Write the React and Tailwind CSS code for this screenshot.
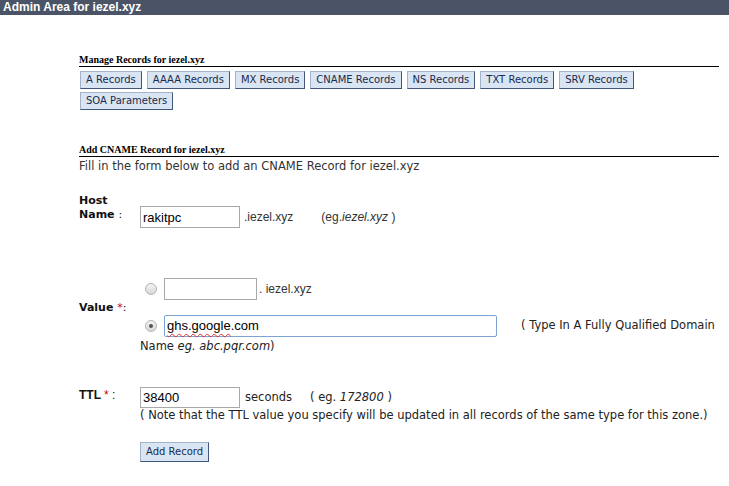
import React from "react"

const verdana = "font-['DejaVu_Sans',Verdana,sans-serif]"
const arial = "font-['Liberation_Sans',Arial,sans-serif]"
const serif = "font-['Liberation_Serif','Times_New_Roman',serif]"

const Btn = ({ children }) => (
    <button
        type="button"
        className={`h-[18px] px-[5px] bg-[#d9e5f2] border border-[#a3b4ca] border-r-[#42567a] border-b-[#42567a] text-[#1a2b4d] text-[10px] leading-none ${verdana}`}
    >
        {children}
    </button>
)

const Radio = ({ checked }) => (
    <span className="w-[12px] h-[12px] rounded-full border border-[#b4b4b4] bg-gradient-to-b from-[#f4f4f4] to-[#d8d8d8] flex items-center justify-center shrink-0">
        {checked && <span className="w-[4px] h-[4px] rounded-full bg-[#555]" />}
    </span>
)

const Field = ({ value, className }) => (
    <input
        readOnly
        value={value}
        className={`border border-[#a9a9a9] px-[2px] text-[13px] text-black outline-none bg-white ${arial} ${className}`}
    />
)

const SectionHead = ({ children, className }) => (
    <div className={`h-[13px] leading-[12px] text-[10px] font-bold text-black border-b border-black ${serif} ${className}`}>
        {children}
    </div>
)

export default function App() {
    const records = ['A Records', 'AAAA Records', 'MX Records', 'CNAME Records', 'NS Records', 'TXT Records', 'SRV Records', 'SOA Parameters']

    return (
        <div className="w-[729px] min-h-[486px] bg-white">
            <div className={`h-[15px] bg-[#4a5466] text-white font-bold text-[12px] leading-[15px] pl-[3px] ${arial}`}>
                Admin Area for iezel.xyz
            </div>

            <div className="ml-[79px] w-[640px]">
                <SectionHead className="mt-[39px]">Manage Records for iezel.xyz</SectionHead>
                <div className="mt-[4px] pl-[1px] flex flex-wrap gap-x-[5px] gap-y-[3px]">
                    {records.map((r) => (
                        <Btn key={r}>{r}</Btn>
                    ))}
                </div>

                <SectionHead className="mt-[34px]">Add CNAME Record for iezel.xyz</SectionHead>
                <div className={`pt-[2px] text-[11.5px] leading-[14px] text-[#333] ${verdana}`}>
                    Fill in the form below to add an CNAME Record for iezel.xyz
                </div>

                {/* host */}
                <div className="mt-[21px] flex items-start">
                    <div className={`w-[61px] shrink-0 text-[11px] leading-[14px] font-bold text-[#111] ${verdana}`}>
                        Host<br />Name <span className="font-normal">:</span>
                    </div>
                    <div className="pt-[12px] flex items-center">
                        <Field value="rakitpc" className="w-[100px] h-[22px]" />
                        <span className={`ml-[4px] text-[12px] text-[#333] ${arial}`}>.iezel.xyz</span>
                        <span className={`ml-[28px] text-[12px] text-[#333] ${arial}`}>
                            (eg.<i>iezel.xyz</i> )
                        </span>
                    </div>
                </div>

                {/* value */}
                <div className="mt-[50px] flex items-center">
                    <div className={`w-[61px] shrink-0 text-[11px] leading-[14px] font-bold text-[#111] ${verdana}`}>
                        Value <span className="text-[#cc0000] font-normal">*</span><span className="font-normal">:</span>
                    </div>
                    <div className="flex flex-col">
                        <div className="flex items-center pl-[5px]">
                            <Radio />
                            <Field value="" className="ml-[7px] w-[93px] h-[22px]" />
                            <span className={`ml-[2px] text-[12px] text-[#333] ${arial}`}>. iezel.xyz</span>
                        </div>
                        <div className="mt-[15px] flex items-center pl-[5px]">
                            <Radio checked />
                            <div className={`ml-[7px] w-[333px] h-[22px] border border-[#7ba3d4] rounded-[2px] px-[2px] flex items-center text-[13px] text-black ${arial}`}>
                                <span className="underline decoration-wavy decoration-[#e03030] decoration-[1px] underline-offset-[3px]">ghs.google</span>.com
                            </div>
                            <span className={`ml-[24px] text-[11.5px] text-[#222] whitespace-nowrap ${verdana}`}>
                                ( Type In A Fully Qualified Domain
                            </span>
                        </div>
                    </div>
                </div>
                <div className={`mt-[2px] ml-[61px] text-[11.5px] leading-[14px] text-[#222] ${verdana}`}>
                    Name <i>eg. abc.pqr.com</i>)
                </div>

                {/* ttl */}
                <div className="mt-[34px] flex items-start">
                    <div className={`w-[61px] shrink-0 text-[12px] leading-[16px] font-bold text-[#111] ${arial}`}>
                        TTL <span className="text-[#cc0000] font-normal">*</span><span className="font-normal"> :</span>
                    </div>
                    <div className="flex flex-col items-start">
                        <div className="flex items-center">
                            <Field value="38400" className="w-[100px] h-[21px]" />
                            <span className={`ml-[5px] text-[11.5px] text-[#222] ${verdana}`}>seconds</span>
                            <span className={`ml-[18px] text-[11.5px] text-[#222] ${verdana}`}>
                                ( eg. <i>172800</i> )
                            </span>
                        </div>
                        <div className={`text-[11.5px] leading-[14px] text-[#222] whitespace-nowrap ${verdana}`}>
                            ( Note that the TTL value you specify will be updated in all records of the same type for this zone.)
                        </div>
                        <button
                            type="button"
                            className={`mt-[20px] h-[20px] px-[5px] bg-[#d9e5f2] border border-[#a3b4ca] border-r-[#42567a] border-b-[#42567a] text-[#1a2b4d] text-[10px] leading-none ${verdana}`}
                        >
                            Add Record
                        </button>
                    </div>
                </div>
            </div>
        </div>
    )
}
